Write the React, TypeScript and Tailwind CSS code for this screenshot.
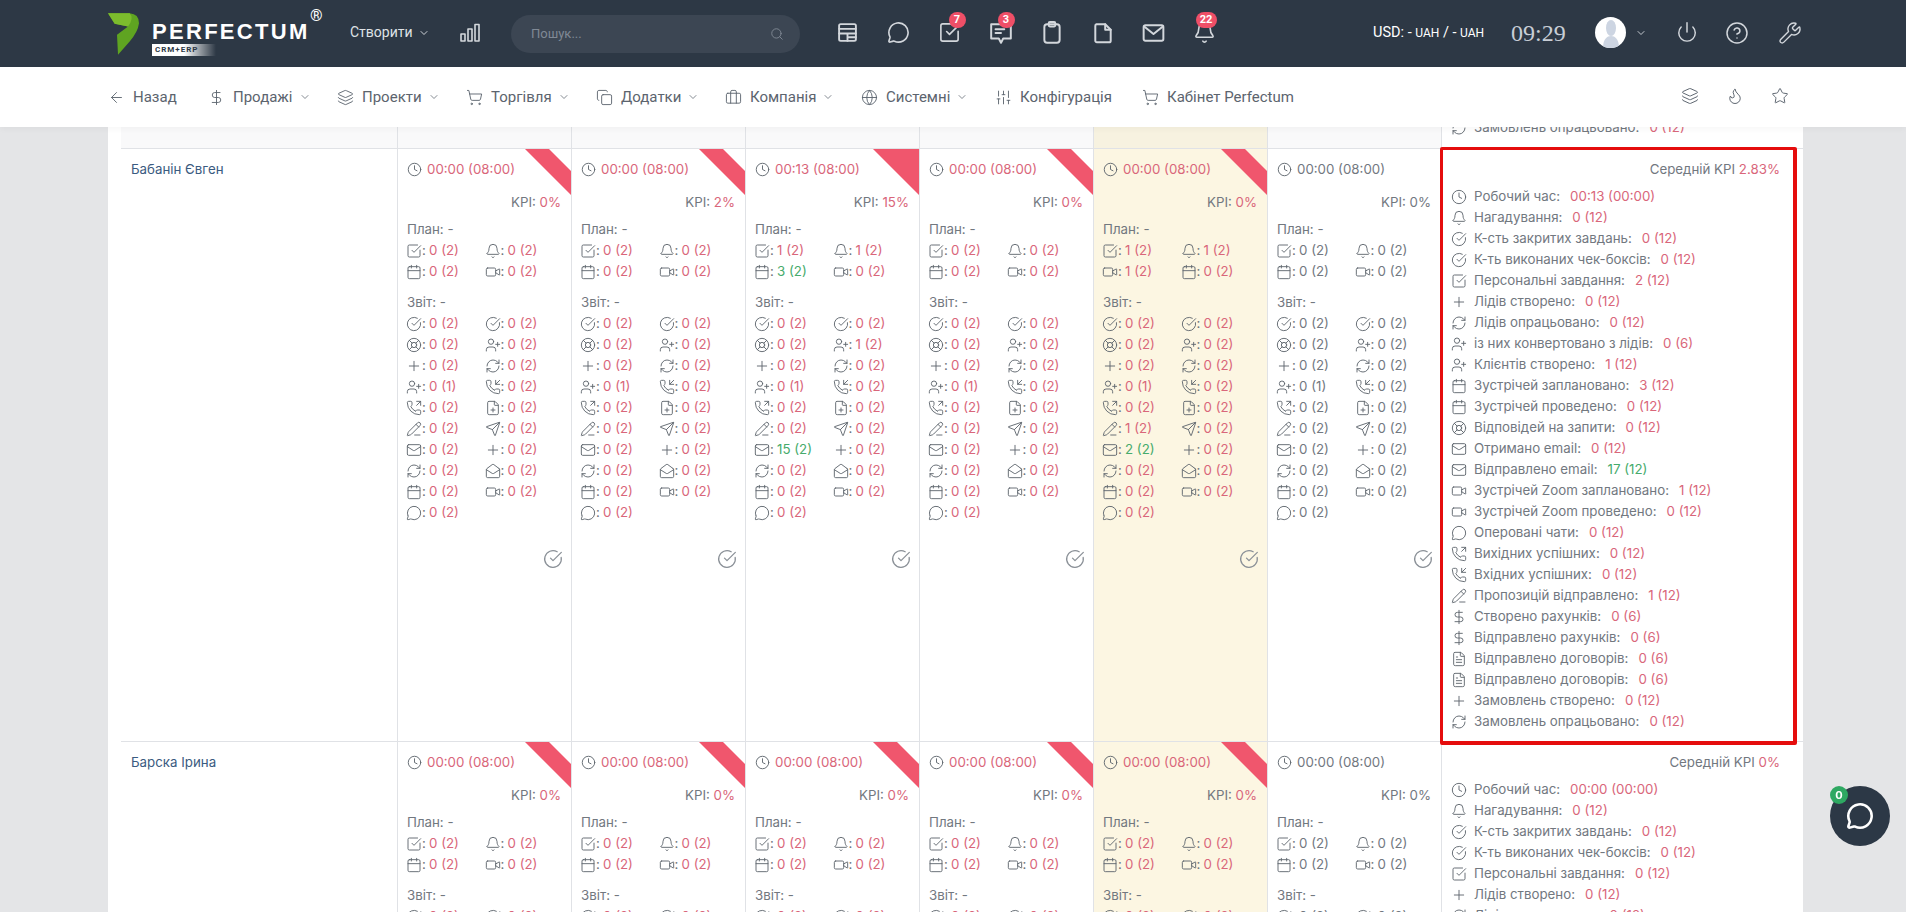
import React from "react";
import {
  ArrowLeft, Bell, Briefcase, Calendar, ChevronDown, CircleCheckBig, CircleHelp, Clock, Copy, DollarSign, FilePlus, FileText, Flame,
  Globe, Layers, LifeBuoy, Mail, MailOpen, MessageCircle, PencilLine, PhoneIncoming, PhoneOutgoing, Plus, Power, RefreshCw, Search, Send,
  ShoppingCart, SlidersVertical, SquareCheckBig, Star, UserPlus, Video, Wrench,
} from "lucide-react";

type Ic = React.ComponentType<any>;
const V: React.FC<{ a: string | number; b: string | number; neutral?: boolean }> = ({ a, b, neutral }) => {
  const good = typeof a === "number" && typeof b === "number" && a >= b;
  const c = neutral ? "text-[#72787f]" : good ? "text-[#46ab6c]" : "text-[#d9667a]";
  return <span className={c}>{a} ({b})</span>;
};

const Item: React.FC<{ I: Ic; a: number; b: number; neutral?: boolean }> = ({ I, a, b, neutral }) => (
  <div className="flex h-[21px] items-center">
    <span className="flex w-[16px] flex-none items-center justify-center"><I size={16} strokeWidth={1.4} className="text-[#5f666e]" /></span>
    <span className="w-[6px] flex-none">:</span>
    <span className="ml-[1px]"><V a={a} b={b} neutral={neutral} /></span>
  </div>
);

const reportIcons: Ic[] = [CircleCheckBig, CircleCheckBig, LifeBuoy, UserPlus, Plus, RefreshCw, UserPlus, PhoneIncoming, PhoneOutgoing, FilePlus, PencilLine, Send, Mail, Plus, RefreshCw, MailOpen, Calendar, Video, MessageCircle];

type Day = { time: string; kpi: string; plan: number[]; swap?: boolean; rep?: Record<number, number>; ribbon: "band" | "tri" | "none"; hl?: boolean; neutral?: boolean };

const DayCell: React.FC<{ d: Day }> = ({ d }) => {
  const planIcons: Ic[] = d.swap ? [SquareCheckBig, Bell, Video, Calendar] : [SquareCheckBig, Bell, Calendar, Video];
  const tone = d.neutral ? "text-[#72787f]" : "text-[#d9667a]";
  return (
    <div className={`relative h-full overflow-hidden border-l border-[#e0e2e6] pl-[8px] pr-[10px] pt-[10px] ${d.hl ? "bg-[#fcf6e2]" : "bg-white"}`}>
      {d.ribbon === "band" && (
        <svg className="absolute right-0 top-0" width="46" height="46" viewBox="0 0 46 46"><polygon points="0,0 24,0 46,22 46,46" fill="#f0566d" /></svg>
      )}
      {d.ribbon === "tri" && (
        <svg className="absolute right-0 top-0" width="46" height="46" viewBox="0 0 46 46"><polygon points="0,0 46,0 46,46" fill="#f0566d" /></svg>
      )}
      <div className={`flex h-[21px] items-center pl-[1px] ${tone}`}>
        <Clock size={15} strokeWidth={1.5} className="mr-[5px] text-[#5f666e]" />
        <span>{d.time}</span>
      </div>
      <div className="mt-[12px] h-[21px] text-right leading-[21px]">KPI: <span className={tone}>{d.kpi}</span></div>
      <div className="mt-[6px] h-[21px] pl-[1px] leading-[21px]">План: -</div>
      <div className="grid grid-cols-[78.5px_78.5px]">
        {d.plan.map((v, i) => <Item key={i} I={planIcons[i]} a={v} b={2} neutral={d.neutral} />)}
      </div>
      <div className="mt-[10px] h-[21px] pl-[1px] leading-[21px]">Звіт: -</div>
      <div className="grid grid-cols-[78.5px_78.5px]">
        {reportIcons.map((I, i) => <Item key={i} I={I} a={d.rep?.[i] ?? 0} b={i === 6 ? 1 : 2} neutral={d.neutral} />)}
      </div>
      <div className="mt-[26px] mr-[-2px] flex justify-end">
        <CircleCheckBig size={20} strokeWidth={1.5} className="text-[#8a9097]" />
      </div>
    </div>
  );
};

const summaryRows: [Ic, string, string | number, string | number][] = [
  [Clock, "Робочий час", "00:13", "00:00"],
  [Bell, "Нагадування", 0, 12],
  [CircleCheckBig, "К-сть закритих завдань", 0, 12],
  [CircleCheckBig, "К-ть виконаних чек-боксів", 0, 12],
  [SquareCheckBig, "Персональні завдання", 2, 12],
  [Plus, "Лідів створено", 0, 12],
  [RefreshCw, "Лідів опрацьовано", 0, 12],
  [UserPlus, "із них конвертовано з лідів", 0, 6],
  [UserPlus, "Клієнтів створено", 1, 12],
  [Calendar, "Зустрічей заплановано", 3, 12],
  [Calendar, "Зустрічей проведено", 0, 12],
  [LifeBuoy, "Відповідей на запити", 0, 12],
  [Mail, "Отримано email", 0, 12],
  [Mail, "Відправлено email", 17, 12],
  [Video, "Зустрічей Zoom заплановано", 1, 12],
  [Video, "Зустрічей Zoom проведено", 0, 12],
  [MessageCircle, "Оперовані чати", 0, 12],
  [PhoneOutgoing, "Вихідних успішних", 0, 12],
  [PhoneIncoming, "Вхідних успішних", 0, 12],
  [PencilLine, "Пропозицій відправлено", 1, 12],
  [DollarSign, "Створено рахунків", 0, 6],
  [DollarSign, "Відправлено рахунків", 0, 6],
  [FileText, "Відправлено договорів", 0, 6],
  [FileText, "Відправлено договорів", 0, 6],
  [Plus, "Замовлень створено", 0, 12],
  [RefreshCw, "Замовлень опрацьовано", 0, 12],
];

const SumRow: React.FC<{ I: Ic; label: string; a: string | number; b: string | number }> = ({ I, label, a, b }) => (
  <div className="flex h-[21px] flex-none items-center pl-[9px] whitespace-nowrap">
    <span className="mr-[7px] flex w-[16px] flex-none justify-center"><I size={16} strokeWidth={1.4} className="text-[#5f666e]" /></span>
    <span className="mr-[10px]">{label}:</span>
    <V a={a} b={b} />
  </div>
);

const SummaryCell: React.FC<{ kpi: string; zero?: boolean; red?: boolean }> = ({ kpi, zero, red }) => (
  <div className="relative border-l border-[#e0e2e6] bg-white pt-[10px] pb-[9px]">
    {red && <div className="absolute left-[-2px] top-[-2px] z-10 h-[598px] w-[357px] rounded-[2px] border-[3px] border-r-[4px] border-b-[4px] border-[#e50d0d]" />}
    <div className="h-[21px] pr-[11px] text-right leading-[21px]">Середній KPI <span className="text-[#d9667a]">{kpi}</span></div>
    <div className="mt-[6px] flex flex-col">
      {summaryRows.map(([I, l, a, b], i) => (
        <SumRow key={i} I={I} label={l} a={i === 0 ? (zero ? "00:00" : "00:13") : zero ? 0 : a} b={b} />
      ))}
    </div>
  </div>
);

const z = [0, 0, 0, 0];
const row1: Day[] = [
  { time: "00:00 (08:00)", kpi: "0%", plan: z, ribbon: "band" },
  { time: "00:00 (08:00)", kpi: "2%", plan: z, ribbon: "band" },
  { time: "00:13 (08:00)", kpi: "15%", plan: [1, 1, 3, 0], rep: { 3: 1, 12: 15 }, ribbon: "tri" },
  { time: "00:00 (08:00)", kpi: "0%", plan: z, ribbon: "band" },
  { time: "00:00 (08:00)", kpi: "0%", plan: [1, 1, 1, 0], swap: true, rep: { 10: 1, 12: 2 }, ribbon: "band", hl: true },
  { time: "00:00 (08:00)", kpi: "0%", plan: z, ribbon: "none", neutral: true },
];
const row2: Day[] = [
  ...[0, 1, 2, 3].map((): Day => ({ time: "00:00 (08:00)", kpi: "0%", plan: z, ribbon: "band" })),
  { time: "00:00 (08:00)", kpi: "0%", plan: z, ribbon: "band", hl: true },
  { time: "00:00 (08:00)", kpi: "0%", plan: z, ribbon: "none", neutral: true },
];

const gridCols = "grid grid-cols-[276px_repeat(6,174px)_350px]";

const Row: React.FC<{ name: string; days: Day[]; kpi: string; zero?: boolean; red?: boolean }> = ({ name, days, kpi, zero, red }) => (
  <div className={`${gridCols} border-t border-[#e0e2e6]`}>
    <div className="bg-white pl-[10px] pt-[10px] leading-[21px] text-[#3b5b80]">{name}</div>
    {days.map((d, i) => <DayCell key={i} d={d} />)}
    <SummaryCell kpi={kpi} zero={zero} red={red} />
  </div>
);

const HeaderIcon: React.FC<{ badge?: string; pos?: string; children: React.ReactNode }> = ({ badge, pos, children }) => (
  <div className="relative flex h-[67px] w-[51px] items-center justify-center pb-[2px] text-[#d3d7dc]">
    {children}
    {badge && (
      <span className={`absolute top-[12px] flex h-[16px] items-center justify-center rounded-full bg-[#ef4f67] text-[11px] font-bold text-white ${pos}`}>{badge}</span>
    )}
  </div>
);

const stroke = { fill: "none", stroke: "currentColor", strokeWidth: 1.8, strokeLinecap: "round" as const, strokeLinejoin: "round" as const };

const NavItem: React.FC<{ I: Ic; label: string; w: string; chev?: boolean }> = ({ I, label, w, chev }) => (
  <div className={`flex flex-none items-center ${w}`}>
    <I size={17} strokeWidth={1.3} className="mr-[8px] flex-none" />
    <span>{label}</span>
    {chev && <ChevronDown size={12} strokeWidth={1.5} className="ml-[6px]" />}
  </div>
);

export default function App() {
  return (
    <div className="flex h-[912px] w-full flex-col overflow-hidden bg-[#e4e5e7] text-[13.3px] text-[#72787f] [font-family:'Inter','Liberation_Sans',sans-serif]">
      <header className="flex h-[67px] flex-none items-center bg-[#2d3845] pl-[108px] text-white [font-family:'Roboto',sans-serif]">
        <div className="relative flex h-[67px] w-[242px] flex-none items-center">
          <svg width="31" height="42" viewBox="25 10 93 125" className="flex-none">
            <path d="M25 10 L90 10 Q118 12 118 40 Q115 65 90 95 L55 135 L52 75 L85 50 L45 42 Z" fill="#5fa421" />
            <path d="M25 10 L90 10 Q104 24 85 50 L45 42 Z" fill="#7cbc2d" />
          </svg>
          <div className="relative ml-[13px] h-[43px] w-[170px]">
            <div className="pt-[7px] text-[22px] font-bold leading-[26px] tracking-[2.3px] [font-family:'Liberation_Sans',sans-serif]">PERFECTUM</div>
            <div className="absolute left-0 top-[32px] flex h-[12px] w-[64px] items-center bg-gradient-to-r from-white via-white to-transparent pl-[3px] text-[8px] font-bold leading-none tracking-[1px] text-[#2d3845]">CRM+ERP</div>
            <div className="absolute left-[158px] top-[-4px] text-[16px] leading-[16px]">®</div>
          </div>
        </div>
        <div className="flex w-[110px] flex-none items-center pb-[2px] text-[14px] text-[#dfe2e6]">
          Створити <ChevronDown size={12} strokeWidth={1.8} className="ml-[5px]" />
        </div>
        <div className="w-[51px] flex-none pb-[2px]">
          <svg width="20" height="20" viewBox="0 0 20 20" {...stroke} strokeWidth={1.6} className="text-[#d3d7dc]">
            <rect x="1" y="11" width="4" height="7" /><rect x="8" y="6" width="4" height="12" /><rect x="15" y="1.5" width="4" height="16.5" />
          </svg>
        </div>
        <div className="flex h-[38px] w-[289px] flex-none items-center justify-between rounded-[19px] bg-[#3c4653] pl-[20px] pr-[16px] text-[13px] text-[#808995]">
          Пошук...<Search size={14} strokeWidth={1.6} />
        </div>
        <div className="ml-[22px] flex flex-none">
          <HeaderIcon>
            <svg width="21" height="21" viewBox="0 0 20 20" {...stroke}><rect x="2" y="2" width="16" height="16" rx="1.5" /><path d="M2 6.500h16M2 11h16M10 11v7" /><path d="M11 14.500h7" /></svg>
          </HeaderIcon>
          <HeaderIcon><MessageCircle size={23} strokeWidth={1.7} /></HeaderIcon>
          <HeaderIcon badge="7" pos="left-[calc(50%-1px)] w-[17px]"><SquareCheckBig size={23} strokeWidth={1.7} /></HeaderIcon>
          <HeaderIcon badge="3" pos="left-[calc(50%-3px)] w-[17px]">
            <svg width="24" height="24" viewBox="0 0 22 22" {...stroke}><path d="M2 3h18v13h-7l-2 4-2-4H2z" /><path d="M6 7.500h8M6 11h5" /></svg>
          </HeaderIcon>
          <HeaderIcon>
            <svg width="22" height="24" viewBox="0 0 20 22" {...stroke}><rect x="3" y="3" width="14" height="17" rx="2.500" /><rect x="7" y="1" width="6" height="4" rx="1" /></svg>
          </HeaderIcon>
          <HeaderIcon>
            <svg width="22" height="22" viewBox="0 0 20 20" {...stroke}><path d="M4 2h8l5 5v10a1.500 1.500 0 0 1-1.500 1.500h-11a1.500 1.500 0 0 1-1.500-1.500V3.500A1.500 1.500 0 0 1 4 2z" /><path d="M12 2v5h5" /></svg>
          </HeaderIcon>
          <HeaderIcon>
            <svg width="23" height="22" viewBox="0 0 21 20" {...stroke}><rect x="1.500" y="3" width="18" height="14" rx="1.500" /><path d="M2 4l8.500 7 8.500-7" /></svg>
          </HeaderIcon>
          <HeaderIcon badge="22" pos="left-[calc(50%-9px)] w-[21px]"><Bell size={23} strokeWidth={1.7} /></HeaderIcon>
        </div>
        <div className="ml-[143px] w-[138px] flex-none pb-[2px] text-[14.500px] whitespace-nowrap">USD: - <span className="text-[12px]">UAH</span> / - <span className="text-[12px]">UAH</span></div>
        <div className="w-[84px] flex-none pb-[2px] text-[24px] text-[#c8ced6] [font-family:'Liberation_Serif',serif]">09:29</div>
        <div className="mb-[2px] flex h-[31px] w-[31px] flex-none items-end justify-center overflow-hidden rounded-full bg-white">
          <svg width="24" height="29" viewBox="0 0 24 29"><ellipse cx="12" cy="9" rx="5" ry="8" fill="#cdd5e2" /><path d="M4 29c0-9 4-12 8-12s8 3 8 12z" fill="#cdd5e2" /></svg>
        </div>
        <ChevronDown size={12} strokeWidth={1.8} className="mb-[2px] ml-[9px] flex-none text-[#d3d7dc]" />
        <div className="mb-[2px] ml-[14px] flex flex-none text-[#d3d7dc]">
          <div className="flex w-[51px] justify-center"><Power size={22} strokeWidth={1.6} /></div>
          <div className="flex w-[50px] justify-center"><CircleHelp size={24} strokeWidth={1.5} /></div>
          <div className="flex w-[55px] justify-center"><Wrench size={24} strokeWidth={1.4} /></div>
        </div>
      </header>

      <nav className="z-20 flex h-[60px] flex-none items-center bg-white pl-[108px] text-[15px] text-[#5c646e] shadow-[0_2px_6px_rgba(0,0,0,0.04)] [font-family:'Roboto',sans-serif]">
        <NavItem I={ArrowLeft} label="Назад" w="w-[100px]" />
        <NavItem I={DollarSign} label="Продажі" w="w-[129px]" chev />
        <NavItem I={Layers} label="Проекти" w="w-[129px]" chev />
        <NavItem I={ShoppingCart} label="Торгівля" w="w-[130px]" chev />
        <NavItem I={Copy} label="Додатки" w="w-[129px]" chev />
        <NavItem I={Briefcase} label="Компанія" w="w-[136px]" chev />
        <NavItem I={Globe} label="Системні" w="w-[134px]" chev />
        <NavItem I={SlidersVertical} label="Конфігурація" w="w-[147px]" />
        <NavItem I={ShoppingCart} label="Кабінет Perfectum" w="w-[539px]" />
        <div className="mb-[2px] flex flex-none gap-[27px]">
          <Layers size={18} strokeWidth={1.3} />
          <Flame size={18} strokeWidth={1.3} />
          <Star size={18} strokeWidth={1.3} />
        </div>
      </nav>

      <main className="relative min-h-0 flex-1 overflow-hidden pl-[108px]">
        <div className="w-[1695px] bg-white pl-[13px]">
          <div className={`${gridCols} h-[21px] overflow-hidden`}>
            <div className="bg-[#f9f9fa]" />
            {[0, 1, 2, 3].map((i) => <div key={i} className="border-l border-[#e0e2e6] bg-[#f9f9fa]" />)}
            <div className="border-l border-[#e0e2e6] bg-[#f7f2e0]" />
            <div className="border-l border-[#e0e2e6] bg-[#f9f9fa]" />
            <div className="flex flex-col justify-end overflow-hidden border-l border-[#e0e2e6] bg-white pb-[10px]">
              <SumRow I={RefreshCw} label="Замовлень опрацьовано" a={0} b={12} />
            </div>
          </div>
          <Row name="Бабанін Євген" days={row1} kpi="2.83%" red />
          <Row name="Барска Ірина" days={row2} kpi="0%" zero />
        </div>
      </main>

      <div className="fixed left-[1830px] top-[786px] z-30 flex h-[60px] w-[60px] items-center justify-center rounded-full bg-[#2c3846] text-white">
        <MessageCircle size={28} strokeWidth={2.2} />
        <span className="absolute left-0 top-0 flex h-[18px] w-[18px] items-center justify-center rounded-full bg-[#2ea862] text-[11px] font-bold text-white">0</span>
      </div>
    </div>
  );
}
